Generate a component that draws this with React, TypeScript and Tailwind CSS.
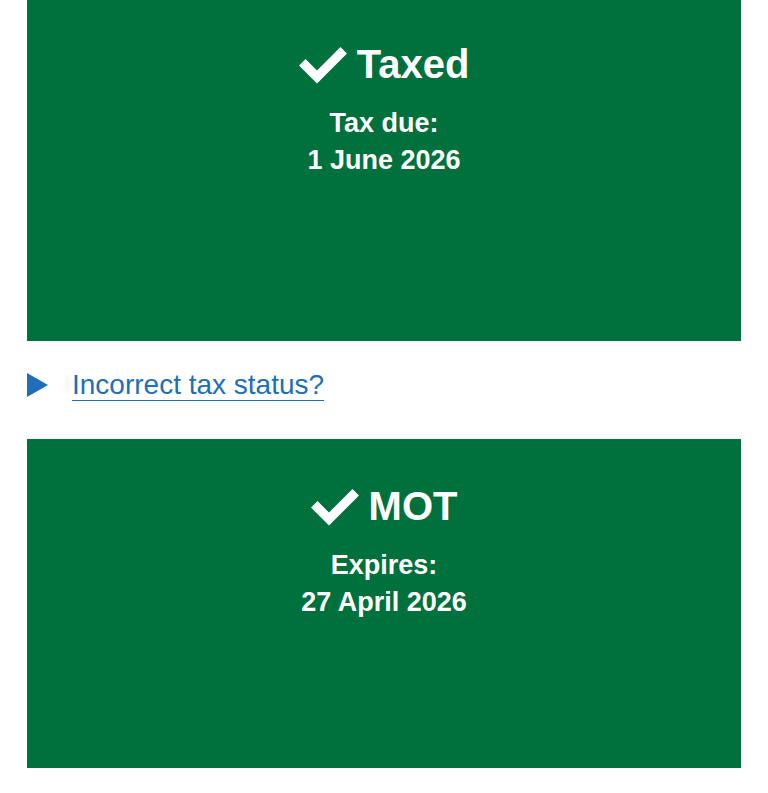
const Tick = () => (
  <svg width="48" height="39" viewBox="0 0 48 39" fill="white" aria-hidden="true">
    <path d="M0 20.5 L6.5 14 L18 25.5 L41.5 2 L48 8.5 L18 38.5 Z" />
  </svg>
)

type StatusProps = {
  title: string
  label: string
  date: string
  height: string
  top: string
}

const StatusPanel = ({ title, label, date, height, top }: StatusProps) => {
  return (
    <div className={`bg-[#00703c] text-white text-center ${height} ${top}`}>
      <div className="flex items-center justify-center gap-[10px]">
        <Tick />
        <span className="text-[40px] leading-[48px] font-bold">{title}</span>
      </div>
      <div className="mt-[17px] text-[27px] leading-[37px] font-bold">
        <p>{label}</p>
        <p>{date}</p>
      </div>
    </div>
  )
}

export default function App() {
  return (
    <div className="bg-white w-[768px] h-[793px] px-[27px] font-['Liberation_Sans',Arial,sans-serif]">
      <StatusPanel title="Taxed" label="Tax due:" date="1 June 2026" height="h-[341px]" top="pt-[40px]" />

      <div className="flex items-center pt-[28px] pb-[38px]">
        <svg width="21" height="24" viewBox="0 0 21 24" className="shrink-0" aria-hidden="true">
          <path d="M0 0 L21 12 L0 24 Z" fill="#1d70b8" />
        </svg>
        <a
          href="#"
          className="ml-[24px] text-[28px] leading-[32px] text-[#1d70b8] underline decoration-1 underline-offset-[6px]"
        >
          Incorrect tax status?
        </a>
      </div>

      <StatusPanel title="MOT" label="Expires:" date="27 April 2026" height="h-[329px]" top="pt-[43px]" />
    </div>
  )
}
